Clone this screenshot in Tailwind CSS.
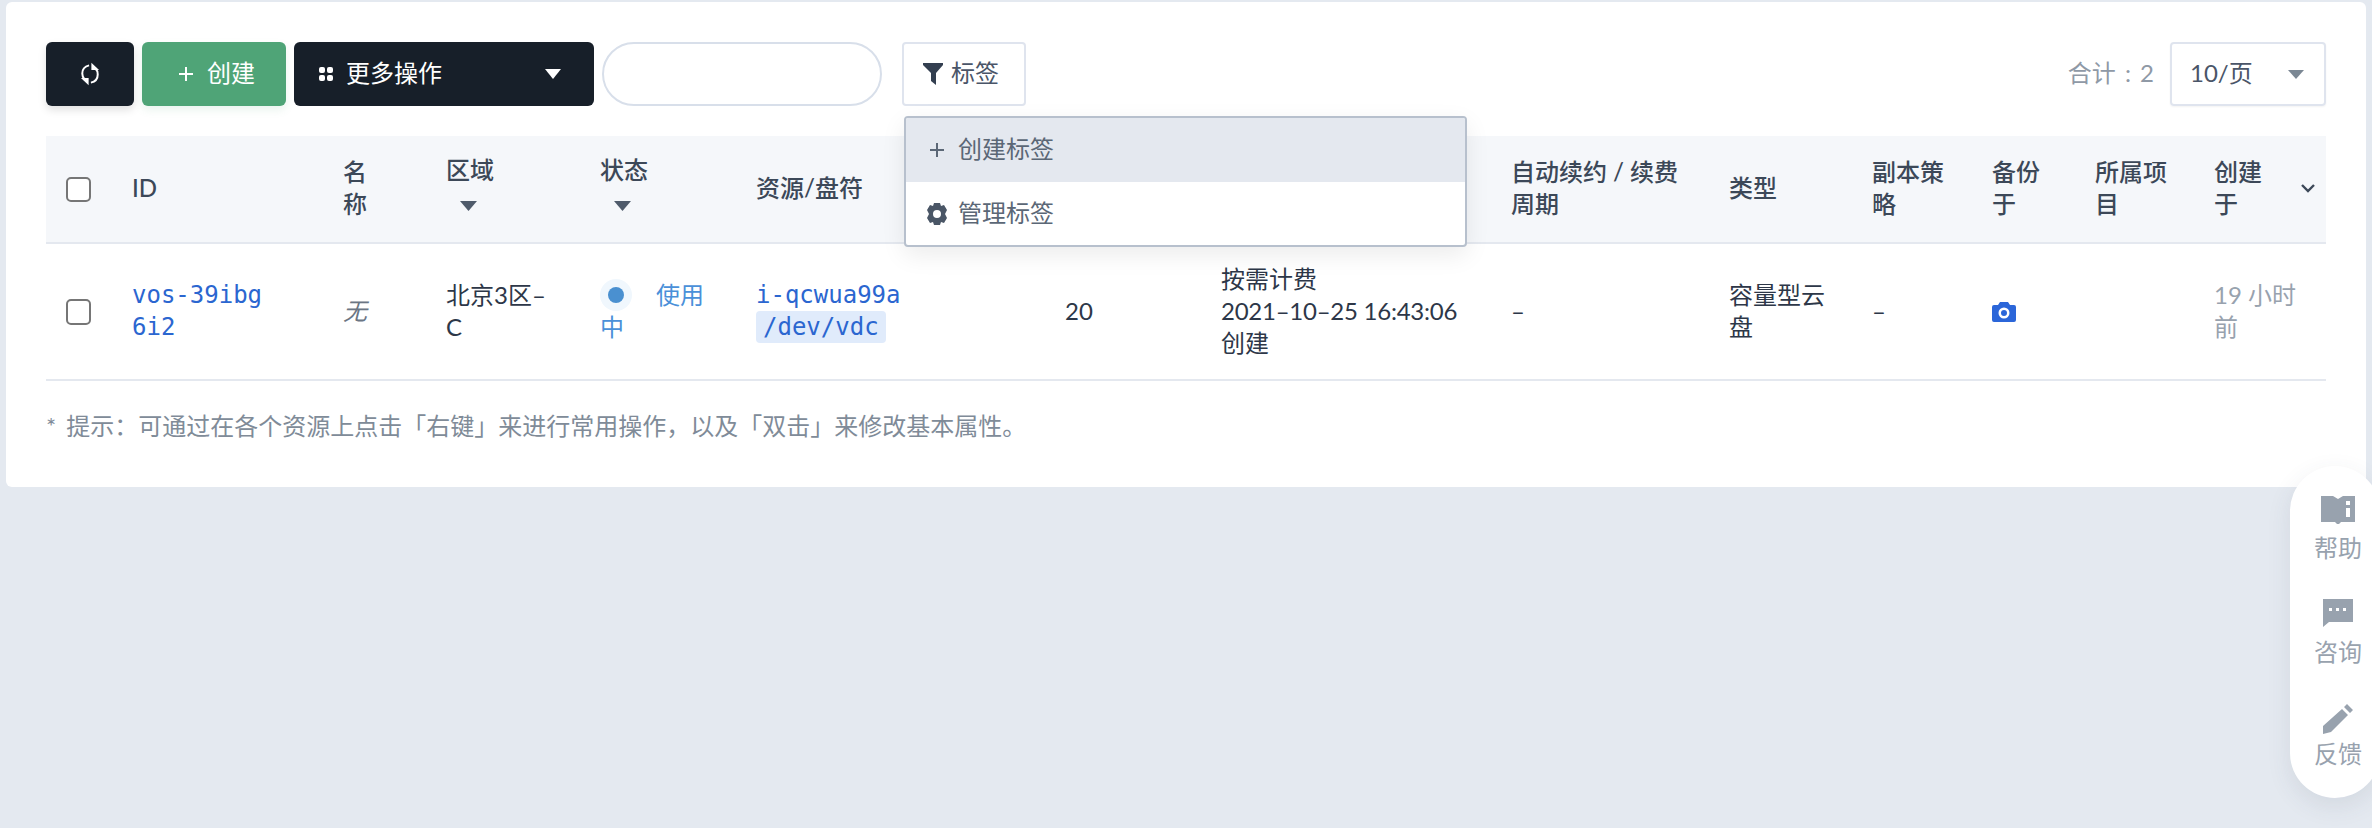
<!DOCTYPE html>
<html lang="zh-CN">
<head>
    <meta charset="UTF-8">
    <title>云盘列表</title>
    <script src="https://cdn.jsdelivr.net/npm/@tailwindcss/browser@4"></script>
</head>
<body class="relative h-[828px] overflow-hidden bg-[#e4e9f0] font-['Lato','Noto_Sans_CJK_SC',sans-serif] text-[24px] leading-[32px] text-[#2d3748]">
    <!-- card -->
    <div class="absolute left-[6px] top-[2px] w-[2360px] h-[485px] rounded-[6px] bg-white px-[40px] pt-[40px]">
        <!-- toolbar -->
        <div class="flex h-[64px] items-stretch">
            <button class="flex w-[88px] items-center justify-center rounded-[6px] bg-[#171f29] shadow-[0_4px_8px_rgba(0,0,0,0.12)]">
                <svg class="w-[20px] h-[26px]" viewBox="0 0 22 26" fill="none" stroke="#fff" stroke-width="2.2">
                    <path d="M10 3.500C5.500 4.500 2.500 8 2.500 12.500c0 2.500 1 5 2.500 6.500"/>
                    <path d="M12 22.500c4.500-1 7.500-4.500 7.500-9 0-2.500-1-5-2.500-6.500"/>
                    <path d="M1 17.500h8.500v8z" fill="#fff" stroke="none"/>
                    <path d="M21 8.500h-8.500v-8z" fill="#fff" stroke="none"/>
                </svg>
            </button>
            <button class="ml-[8px] flex w-[144px] items-center rounded-[6px] bg-[#4fa477] pl-[37px] text-white shadow-[0_4px_8px_rgba(79,164,119,0.12)]">
                <svg class="w-[14px] h-[14px]" viewBox="0 0 14 14" stroke="#fff" stroke-width="2"><path d="M7 0v14M0 7h14"/></svg>
                <span class="ml-[14px] pb-[2px]">创建</span>
            </button>
            <button class="ml-[8px] flex w-[300px] items-center rounded-[6px] bg-[#171f29] pl-[25px] text-white">
                <svg class="w-[14px] h-[14px]" viewBox="0 0 14 14" fill="#fff">
                    <rect width="6" height="6" rx="2"/><rect x="8" width="6" height="6" rx="2"/>
                    <rect y="8" width="6" height="6" rx="2"/><rect x="8" y="8" width="6" height="6" rx="2"/>
                </svg>
                <span class="ml-[13px] pb-[2px]">更多操作</span>
                <svg class="ml-[103px] w-[16px] h-[10px]" viewBox="0 0 16 10" fill="#fff"><path d="M0 0h16l-8 10z"/></svg>
            </button>
            <input class="ml-[8px] w-[280px] rounded-full border-2 border-[#d8dfea] bg-white outline-none" type="text">
            <div class="relative ml-[20px]">
                <button class="flex h-full w-[124px] items-center rounded-[4px] border-2 border-[#dfe4ee] pl-[19px] text-[#4a5568]">
                    <svg class="w-[20px] h-[22px]" viewBox="0 0 20 22" fill="#333f50"><path d="M0 0h20v2l-7 8v12l-5-4v-8L0 2z"/></svg>
                    <span class="ml-[8px] pb-[2px]">标签</span>
                </button>
                <!-- tag menu -->
                <div class="absolute left-[2px] top-[74px] z-10 w-[563px] overflow-hidden rounded-[4px] border-2 border-[#b7c0cd] bg-white text-[#5b6776] shadow-[0_8px_24px_rgba(0,0,0,0.08)]">
                    <div class="flex h-[64px] items-center bg-[#e4e8ef] pl-[24px]">
                        <svg class="w-[14px] h-[14px]" viewBox="0 0 14 14" stroke="#5b6776" stroke-width="2"><path d="M7 0v14M0 7h14"/></svg>
                        <span class="ml-[14px] pb-[2px]">创建标签</span>
                    </div>
                    <div class="flex h-[63px] items-center pl-[21px]">
                        <svg class="w-[20px] h-[22px]" viewBox="0 0 20 22" fill="#4a5666">
                            <path fill-rule="evenodd" d="M7 0h6l1 3 3-1 3 5-2 4 2 4-3 5-3-1-1 3H7l-1-3-3 1-3-5 2-4-2-4 3-5 3 1zM10 7a4 4 0 1 0 0 8 4 4 0 0 0 0-8z"/>
                        </svg>
                        <span class="ml-[11px] pb-[2px]">管理标签</span>
                    </div>
                </div>
            </div>
            <div class="ml-auto flex items-center">
                <span class="pb-[2px] text-[#8f99a6] [word-spacing:3px]">合计 : 2</span>
                <div class="ml-[16px] flex h-full w-[156px] items-center rounded-[4px] border-2 border-[#dfe4ee] pl-[18px] shadow-[0_1px_2px_rgba(0,0,0,0.05)]">
                    <span class="pb-[2px] text-[#4a5568]">10/页</span>
                    <svg class="ml-auto mr-[20px] w-[16px] h-[9px]" viewBox="0 0 16 9" fill="#7b8794"><path d="M0 0h16l-8 9z"/></svg>
                </div>
            </div>
        </div>

        <!-- disk table -->
        <table class="mt-[30px] w-[2280px] table-fixed border-collapse text-left">
            <colgroup>
                <col class="w-[66px]"><col class="w-[211px]"><col class="w-[103px]"><col class="w-[154px]">
                <col class="w-[156px]"><col class="w-[309px]"><col class="w-[156px]"><col class="w-[290px]">
                <col class="w-[218px]"><col class="w-[143px]"><col class="w-[120px]"><col class="w-[103px]">
                <col class="w-[119px]"><col class="w-[132px]">
            </colgroup>
            <thead class="bg-[#f5f7fa] text-[#3c4858]">
                <tr class="h-[107px] border-b-2 border-[#e4e8ef] font-medium">
                    <th class="pl-[20px] font-medium"><input type="checkbox" class="block h-[25px] w-[25px] appearance-none rounded-[5px] border-2 border-[#767676] bg-white"></th>
                    <th class="pl-[20px] pb-[2px] font-medium">ID</th>
                    <th class="pl-[20px] pb-[2px] font-medium">名<br>称</th>
                    <th class="pl-[20px] pb-[2px] font-medium">
                        <span class="inline-flex flex-col items-center">区域
                            <svg class="mt-[15px] mb-[12px] mr-[4px] w-[17px] h-[10px]" viewBox="0 0 17 10" fill="#4f5b6b"><path d="M0 0h17l-8.500 10z"/></svg>
                        </span>
                    </th>
                    <th class="pl-[20px] pb-[2px] font-medium">
                        <span class="inline-flex flex-col items-center">状态
                            <svg class="mt-[15px] mb-[12px] mr-[4px] w-[17px] h-[10px]" viewBox="0 0 17 10" fill="#4f5b6b"><path d="M0 0h17l-8.500 10z"/></svg>
                        </span>
                    </th>
                    <th class="pl-[20px] pb-[2px] font-medium">资源/盘符</th>
                    <th class="pl-[20px] pb-[2px] font-medium">大小</th>
                    <th class="pl-[20px] pb-[2px] font-medium">计费方式</th>
                    <th class="pl-[20px] pb-[2px] font-medium">自动续约 / 续费<br>周期</th>
                    <th class="pl-[20px] pb-[2px] font-medium">类型</th>
                    <th class="pl-[20px] pb-[2px] font-medium">副本策<br>略</th>
                    <th class="pl-[20px] pb-[2px] font-medium">备份<br>于</th>
                    <th class="pl-[20px] pb-[2px] font-medium">所属项<br>目</th>
                    <th class="pl-[20px] pb-[2px] font-medium">
                        <div class="flex items-center">
                            <span>创建<br>于</span>
                            <svg class="ml-[39px] w-[14px] h-[9px]" viewBox="0 0 14 9" fill="none" stroke="#3c4858" stroke-width="2.400"><path d="M1 1l6 6 6-6"/></svg>
                        </div>
                    </th>
                </tr>
            </thead>
            <tbody>
                <tr class="h-[137px] border-b-2 border-[#e4e8ef]">
                    <td class="pl-[20px]"><input type="checkbox" class="block h-[26px] w-[25px] appearance-none rounded-[5px] border-2 border-[#767676] bg-white"></td>
                    <td class="pl-[20px] pb-[2px] font-['DejaVu_Sans_Mono',monospace] text-[#2b66d0]">vos-39ibg<br>6i2</td>
                    <td class="pl-[20px] pb-[2px] italic text-[#6b7684]">无</td>
                    <td class="pl-[20px] pb-[2px]">北京3区–<br>C</td>
                    <td class="pl-[20px] pb-[2px] text-[#4a90d9]">
                        <span class="mr-[24px] inline-flex h-[32px] w-[32px] items-center justify-center rounded-full bg-[#f0f7fd] align-top"><span class="block h-[16px] w-[16px] rounded-full bg-[#4a90d0]"></span></span>使用<br>中
                    </td>
                    <td class="pl-[20px] pb-[2px] font-['DejaVu_Sans_Mono',monospace] text-[#2b66d0]">
                        i-qcwua99a<br><span class="inline-block rounded-[4px] bg-[#e0ebfb] px-[7px]">/dev/vdc</span>
                    </td>
                    <td class="pl-[20px] pb-[2px]">20</td>
                    <td class="pl-[20px] pb-[2px]">按需计费<br><span class="tracking-[-0.25px]">2021–10–25 16:43:06</span><br>创建</td>
                    <td class="pl-[20px] pb-[2px]">–</td>
                    <td class="pl-[20px] pb-[2px]">容量型云<br>盘</td>
                    <td class="pl-[20px] pb-[2px]">–</td>
                    <td class="pl-[20px]">
                        <svg class="block w-[24px] h-[20px]" viewBox="0 0 24 20" fill="#2b66d9">
                            <path fill-rule="evenodd" d="M8 0h8l2 3h4a2 2 0 0 1 2 2v13a2 2 0 0 1-2 2H2a2 2 0 0 1-2-2V5a2 2 0 0 1 2-2h4zM12 5.500a5.500 5.500 0 1 0 0 11 5.500 5.500 0 0 0 0-11zM12 8a3 3 0 1 1 0 6 3 3 0 0 1 0-6z"/>
                        </svg>
                    </td>
                    <td class="pl-[20px]"></td>
                    <td class="pl-[20px] pb-[2px] text-[#98a2ae]">19 小时<br>前</td>
                </tr>
            </tbody>
        </table>
        <p class="mt-[29px] text-[#808b98]"><span class="mr-[4px]">*</span> 提示：可通过在各个资源上点击「右键」来进行常用操作，以及「双击」来修改基本属性。</p>
    </div>

    <!-- floating help bar -->
    <div class="absolute right-[-8px] top-[466px] z-20 flex h-[332px] w-[90px] flex-col items-center rounded-full bg-white pl-[6px] pt-[30px] text-[#98a2ae] shadow-[0_8px_24px_rgba(60,72,88,0.10)]">
        <svg class="w-[34px] h-[28px]" viewBox="0 0 34 28" fill="#98a2ae">
            <path fill-rule="evenodd" d="M0 0h12l5 3 5-3h12v26H20l-2 2h-2l-2-2H0zM25 5v4h4V5zM25 12v9h4v-9z"/>
        </svg>
        <span class="mt-[8px]">帮助</span>
        <svg class="mt-[35px] w-[30px] h-[28px]" viewBox="0 0 30 28" fill="#98a2ae">
            <path fill-rule="evenodd" d="M0 0h30v23H6l-6 5zM6 9v3h3V9zM13 9v3h3V9zM20 9v3h3V9z"/>
        </svg>
        <span class="mt-[9px]">咨询</span>
        <svg class="mt-[36px] w-[30px] h-[30px]" viewBox="0 0 30 30" fill="#98a2ae">
            <path d="M24 0l6 6-3 3-6-6zM19 5l6 6L8 28l-8 2v-8z"/>
        </svg>
        <span class="mt-[4px]">反馈</span>
    </div>
</body>
</html>
